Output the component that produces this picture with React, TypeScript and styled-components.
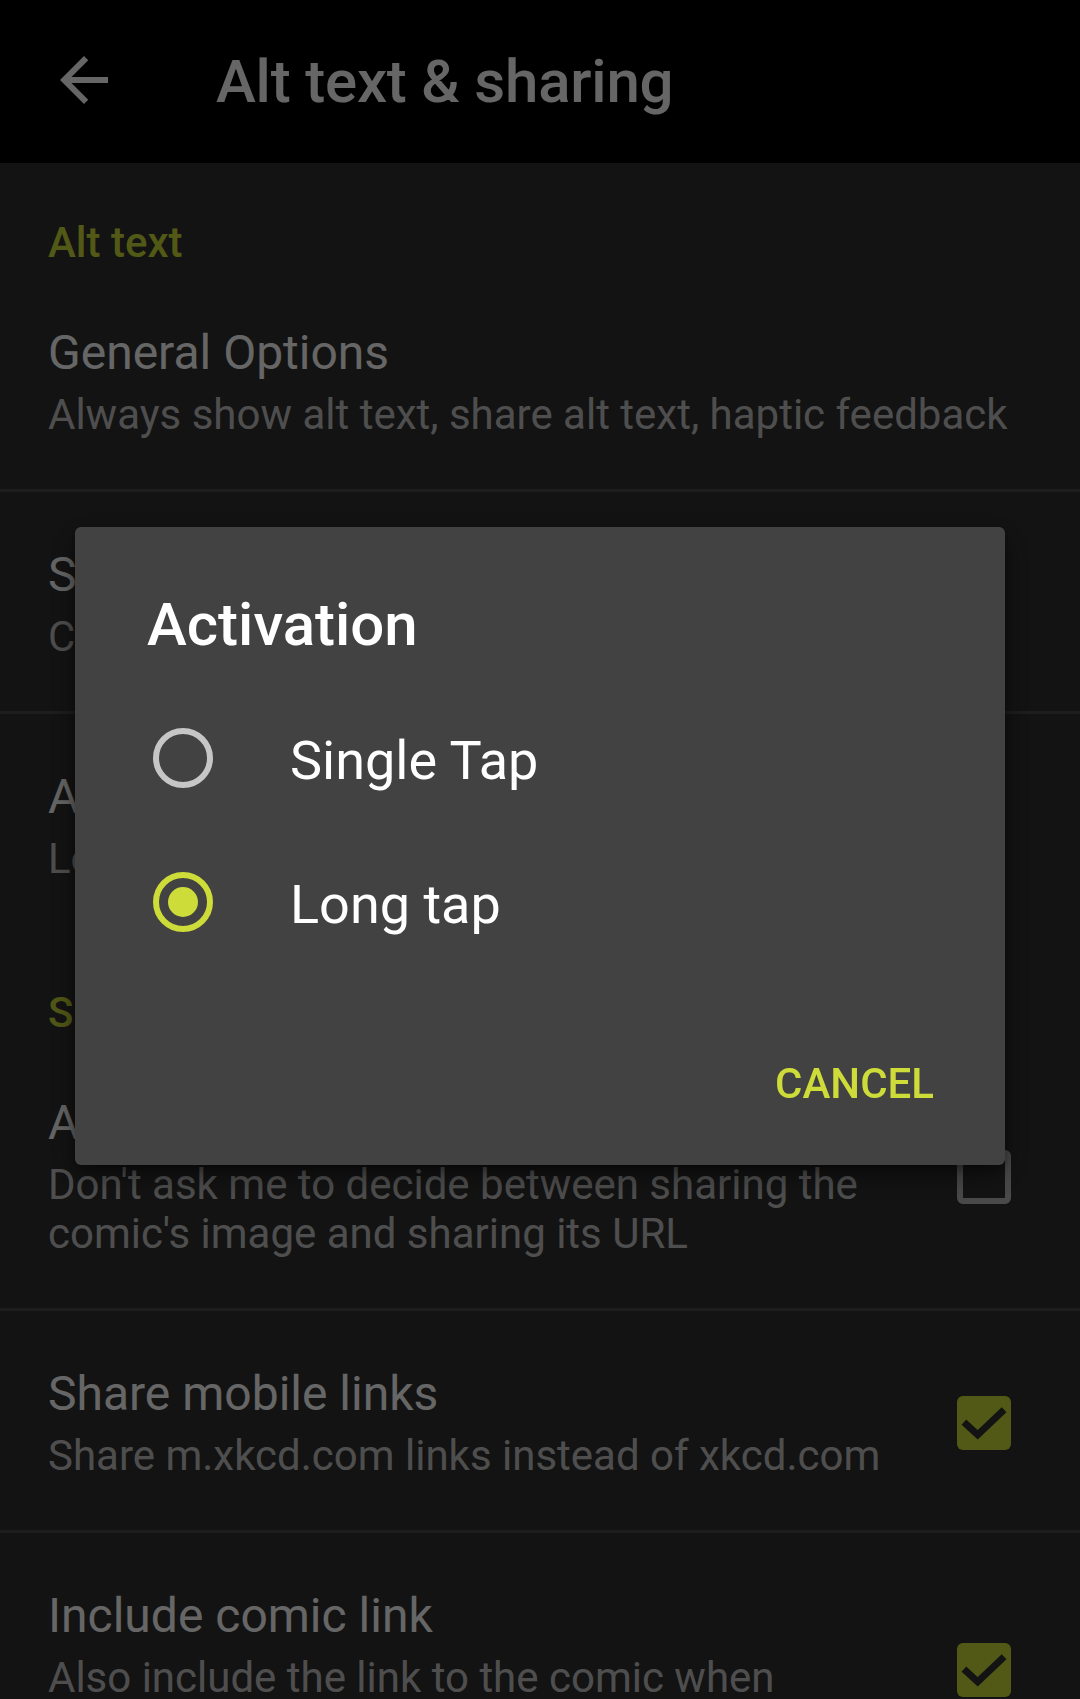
import React from "react";
import styled, { createGlobalStyle } from "styled-components";

const GlobalStyle = createGlobalStyle`
  html, body {
    margin: 0;
    padding: 0;
    background: #303030;
  }
  * { box-sizing: border-box; }
`;

const LIME = "#cddc39";

const Screen = styled.div`
  position: relative;
  width: 1080px;
  height: 1699px;
  overflow: hidden;
  background: #303030;
  font-family: Roboto, "Noto Sans", "Liberation Sans", sans-serif;
  color: #ffffff;
`;

const AppBar = styled.header`
  height: 163px;
  background: #000000;
  display: flex;
  align-items: center;
`;

const BackButton = styled.div`
  width: 72px;
  height: 72px;
  margin-left: 48px;
  margin-bottom: 3px;
  display: flex;
  align-items: center;
  justify-content: center;
  color: #ffffff;
`;

const AppTitle = styled.h1`
  margin: 0 0 0 96px;
  font-size: 60px;
  font-weight: 500;
  line-height: 70px;
  letter-spacing: -0.2px;
  color: #ffffff;
`;

const List = styled.main`
  display: flex;
  flex-direction: column;
`;

const CategoryTitle = styled.div`
  padding: 55px 48px 3px;
  font-size: 42px;
  line-height: 49px;
  font-weight: 500;
  color: ${LIME};
`;

const PrefRow = styled.div<{ $divider?: boolean }>`
  display: flex;
  align-items: center;
  padding: 55px 49px 50px 48px;
  border-top: ${(p) => (p.$divider ? "3px solid #4a4a4a" : "none")};
`;

const PrefText = styled.div`
  flex: 1;
  min-width: 0;
`;

const PrefTitle = styled.div`
  font-size: 48px;
  line-height: 56px;
  color: #ffffff;
`;

const PrefSummary = styled.div`
  margin-top: 9px;
  font-size: 42px;
  line-height: 49px;
  color: #c4c4c4;
`;

const CheckBox = styled.div<{ $checked?: boolean }>`
  flex: none;
  width: 54px;
  height: 54px;
  margin: 0 20px 0 48px;
  border-radius: 6px;
  border: ${(p) => (p.$checked ? "none" : "6px solid #b8b8b8")};
  background: ${(p) => (p.$checked ? LIME : "transparent")};
  display: flex;
  align-items: center;
  justify-content: center;
`;

const Scrim = styled.div`
  position: fixed;
  inset: 0;
  background: rgba(0, 0, 0, 0.6);
  z-index: 10;
`;

const Dialog = styled.div`
  position: fixed;
  left: 75px;
  top: 527px;
  width: 930px;
  background: #424242;
  border-radius: 6px;
  box-shadow: 0 10px 30px rgba(0, 0, 0, 0.45), 0 4px 10px rgba(0, 0, 0, 0.3);
  z-index: 20;
  font-family: Roboto, "Noto Sans", "Liberation Sans", sans-serif;
`;

const DialogTitle = styled.h2`
  margin: 0;
  padding: 63px 72px 0;
  font-size: 60px;
  line-height: 70px;
  font-weight: 500;
  color: #ffffff;
`;

const RadioList = styled.div`
  margin-top: 26px;
  display: flex;
  flex-direction: column;
`;

const RadioRow = styled.div`
  height: 144px;
  display: flex;
  align-items: center;
  padding-left: 78px;
`;

const RadioCircle = styled.span<{ $checked?: boolean }>`
  position: relative;
  flex: none;
  width: 60px;
  height: 60px;
  border-radius: 50%;
  border: 6px solid ${(p) => (p.$checked ? LIME : "#c6c6c6")};
  &::after {
    content: "";
    position: absolute;
    left: 9px;
    top: 9px;
    width: 30px;
    height: 30px;
    border-radius: 50%;
    background: ${LIME};
    display: ${(p) => (p.$checked ? "block" : "none")};
  }
`;

const RadioLabel = styled.span`
  margin-left: 77px;
  margin-top: 5px;
  font-size: 54px;
  line-height: 63px;
  color: #ffffff;
`;

const Actions = styled.div`
  display: flex;
  justify-content: flex-end;
  padding: 55px 47px 28px;
`;

const TextButton = styled.button`
  height: 108px;
  padding: 0 24px;
  border: none;
  background: transparent;
  font-family: inherit;
  font-size: 42px;
  font-weight: 500;
  letter-spacing: 0;
  text-transform: uppercase;
  color: ${LIME};
`;

const ArrowBack = () => (
  <svg width="72" height="72" viewBox="0 0 24 24" fill="currentColor">
    <path d="M20 11H7.83l5.59-5.59L12 4l-8 8 8 8 1.41-1.41L7.83 13H20v-2z" />
  </svg>
);

const Check = () => (
  <svg width="54" height="54" viewBox="0 0 18 18" fill="none">
    <polyline
      points="2.3,8.7 6.9,12.9 15.7,4.6"
      stroke="#303030"
      strokeWidth="2.3"
      strokeLinejoin="miter"
    />
  </svg>
);

type Pref = {
  title: string;
  summary: string;
  divider?: boolean;
  checkbox?: "on" | "off";
};

const altPrefs: Pref[] = [
  { title: "General Options", summary: "Always show alt text, share alt text, haptic feedback" },
  { title: "Style", summary: "Customize font size and appearance", divider: true },
  { title: "Activation", summary: "Long tap", divider: true },
];

const sharePrefs: Pref[] = [
  {
    title: "Always share image",
    summary: "Don't ask me to decide between sharing the comic's image and sharing its URL",
    checkbox: "off",
  },
  {
    title: "Share mobile links",
    summary: "Share m.xkcd.com links instead of xkcd.com",
    divider: true,
    checkbox: "on",
  },
  {
    title: "Include comic link",
    summary: "Also include the link to the comic when sharing its image",
    divider: true,
    checkbox: "on",
  },
];

const PrefItem = ({ p }: { p: Pref }) => (
  <PrefRow $divider={p.divider}>
    <PrefText>
      <PrefTitle>{p.title}</PrefTitle>
      <PrefSummary>{p.summary}</PrefSummary>
    </PrefText>
    {p.checkbox && (
      <CheckBox $checked={p.checkbox === "on"}>{p.checkbox === "on" && <Check />}</CheckBox>
    )}
  </PrefRow>
);

export default function App() {
  return (
    <>
      <GlobalStyle />
      <Screen>
        <AppBar>
          <BackButton>
            <ArrowBack />
          </BackButton>
          <AppTitle>Alt text &amp; sharing</AppTitle>
        </AppBar>
        <List>
          <CategoryTitle>Alt text</CategoryTitle>
          {altPrefs.map((p) => (
            <PrefItem key={p.title} p={p} />
          ))}
          <CategoryTitle>Sharing</CategoryTitle>
          {sharePrefs.map((p) => (
            <PrefItem key={p.title} p={p} />
          ))}
        </List>
        <Scrim />
        <Dialog role="dialog">
          <DialogTitle>Activation</DialogTitle>
          <RadioList>
            <RadioRow>
              <RadioCircle />
              <RadioLabel>Single Tap</RadioLabel>
            </RadioRow>
            <RadioRow>
              <RadioCircle $checked />
              <RadioLabel>Long tap</RadioLabel>
            </RadioRow>
          </RadioList>
          <Actions>
            <TextButton>Cancel</TextButton>
          </Actions>
        </Dialog>
      </Screen>
    </>
  );
}
